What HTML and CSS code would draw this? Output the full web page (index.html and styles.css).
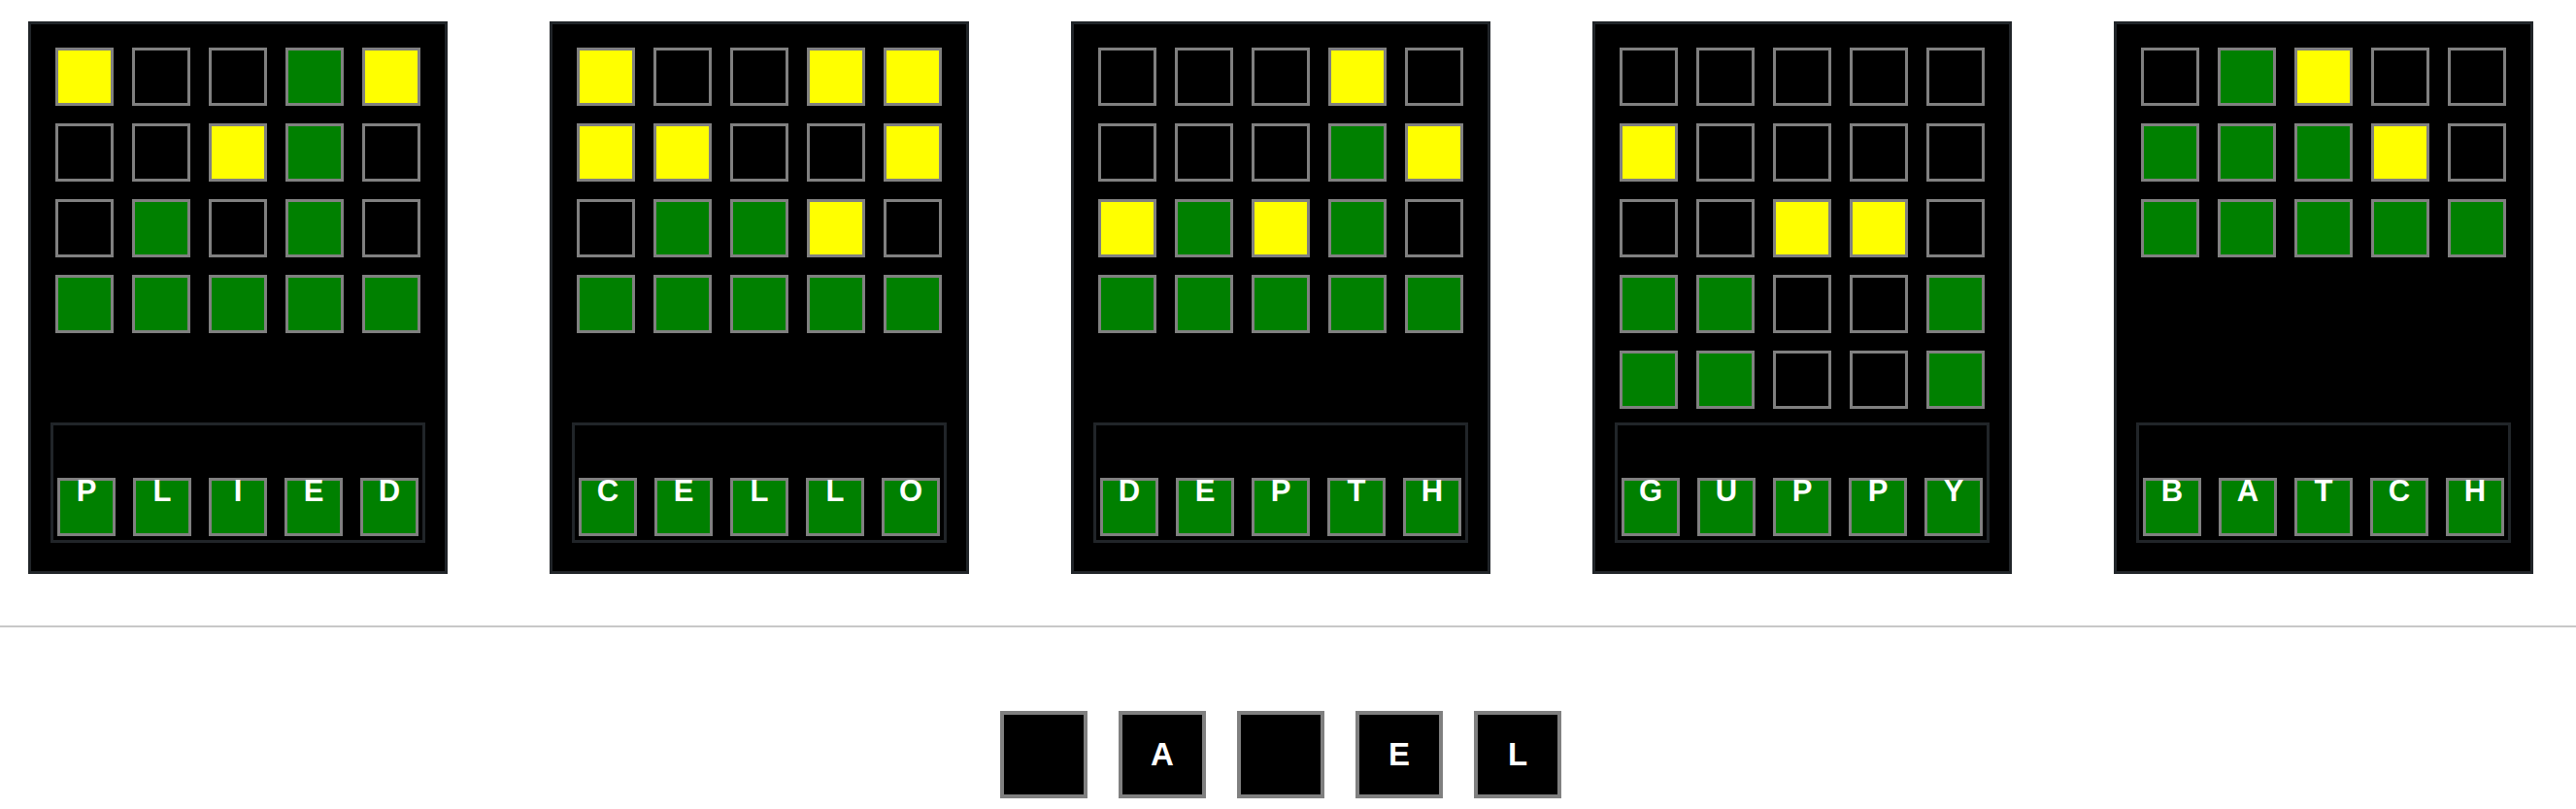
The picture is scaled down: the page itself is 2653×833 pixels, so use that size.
FILE: index.html
```html
<!DOCTYPE html>
<html>
<head>
<meta charset="utf-8">
<title>Boards</title>
<link rel="stylesheet" href="styles.css">
</head>
<body>
<div class="boards">
  <div class="board">
    <div class="guesses">
      <div class="tile y"></div><div class="tile"></div><div class="tile"></div><div class="tile g"></div><div class="tile y"></div>
      <div class="tile"></div><div class="tile"></div><div class="tile y"></div><div class="tile g"></div><div class="tile"></div>
      <div class="tile"></div><div class="tile g"></div><div class="tile"></div><div class="tile g"></div><div class="tile"></div>
      <div class="tile g"></div><div class="tile g"></div><div class="tile g"></div><div class="tile g"></div><div class="tile g"></div>
    </div>
    <div class="answer">
      <div class="tile g"><span class="letter">P</span></div>
      <div class="tile g"><span class="letter">L</span></div>
      <div class="tile g"><span class="letter">I</span></div>
      <div class="tile g"><span class="letter">E</span></div>
      <div class="tile g"><span class="letter">D</span></div>
    </div>
  </div>

  <div class="board">
    <div class="guesses">
      <div class="tile y"></div><div class="tile"></div><div class="tile"></div><div class="tile y"></div><div class="tile y"></div>
      <div class="tile y"></div><div class="tile y"></div><div class="tile"></div><div class="tile"></div><div class="tile y"></div>
      <div class="tile"></div><div class="tile g"></div><div class="tile g"></div><div class="tile y"></div><div class="tile"></div>
      <div class="tile g"></div><div class="tile g"></div><div class="tile g"></div><div class="tile g"></div><div class="tile g"></div>
    </div>
    <div class="answer">
      <div class="tile g"><span class="letter">C</span></div>
      <div class="tile g"><span class="letter">E</span></div>
      <div class="tile g"><span class="letter">L</span></div>
      <div class="tile g"><span class="letter">L</span></div>
      <div class="tile g"><span class="letter">O</span></div>
    </div>
  </div>

  <div class="board">
    <div class="guesses">
      <div class="tile"></div><div class="tile"></div><div class="tile"></div><div class="tile y"></div><div class="tile"></div>
      <div class="tile"></div><div class="tile"></div><div class="tile"></div><div class="tile g"></div><div class="tile y"></div>
      <div class="tile y"></div><div class="tile g"></div><div class="tile y"></div><div class="tile g"></div><div class="tile"></div>
      <div class="tile g"></div><div class="tile g"></div><div class="tile g"></div><div class="tile g"></div><div class="tile g"></div>
    </div>
    <div class="answer">
      <div class="tile g"><span class="letter">D</span></div>
      <div class="tile g"><span class="letter">E</span></div>
      <div class="tile g"><span class="letter">P</span></div>
      <div class="tile g"><span class="letter">T</span></div>
      <div class="tile g"><span class="letter">H</span></div>
    </div>
  </div>

  <div class="board">
    <div class="guesses">
      <div class="tile"></div><div class="tile"></div><div class="tile"></div><div class="tile"></div><div class="tile"></div>
      <div class="tile y"></div><div class="tile"></div><div class="tile"></div><div class="tile"></div><div class="tile"></div>
      <div class="tile"></div><div class="tile"></div><div class="tile y"></div><div class="tile y"></div><div class="tile"></div>
      <div class="tile g"></div><div class="tile g"></div><div class="tile"></div><div class="tile"></div><div class="tile g"></div>
      <div class="tile g"></div><div class="tile g"></div><div class="tile"></div><div class="tile"></div><div class="tile g"></div>
    </div>
    <div class="answer">
      <div class="tile g"><span class="letter">G</span></div>
      <div class="tile g"><span class="letter">U</span></div>
      <div class="tile g"><span class="letter">P</span></div>
      <div class="tile g"><span class="letter">P</span></div>
      <div class="tile g"><span class="letter">Y</span></div>
    </div>
  </div>

  <div class="board">
    <div class="guesses">
      <div class="tile"></div><div class="tile g"></div><div class="tile y"></div><div class="tile"></div><div class="tile"></div>
      <div class="tile g"></div><div class="tile g"></div><div class="tile g"></div><div class="tile y"></div><div class="tile"></div>
      <div class="tile g"></div><div class="tile g"></div><div class="tile g"></div><div class="tile g"></div><div class="tile g"></div>
    </div>
    <div class="answer">
      <div class="tile g"><span class="letter">B</span></div>
      <div class="tile g"><span class="letter">A</span></div>
      <div class="tile g"><span class="letter">T</span></div>
      <div class="tile g"><span class="letter">C</span></div>
      <div class="tile g"><span class="letter">H</span></div>
    </div>
  </div>
</div>

<hr class="divider">

<div class="keys">
  <div class="key"></div>
  <div class="key">A</div>
  <div class="key"></div>
  <div class="key">E</div>
  <div class="key">L</div>
</div>
</body>
</html>
```

FILE: styles.css
```css
html, body {
  margin: 0;
  padding: 0;
  background: #ffffff;
  font-family: "Liberation Sans", Arial, sans-serif;
}

.boards {
  display: flex;
  justify-content: center;
  gap: 105px;
  padding: 22px 15px 0 0;
}

.board {
  box-sizing: border-box;
  width: 432px;
  background: #000000;
  border: 3px solid #212529;
  padding: 24px 0 29px;
  display: flex;
  flex-direction: column;
  align-items: center;
}

.guesses {
  height: 386px;
  display: grid;
  grid-template-columns: repeat(5, 60px);
  grid-auto-rows: 60px;
  column-gap: 19px;
  row-gap: 18px;
  align-content: start;
}

.tile {
  box-sizing: border-box;
  width: 60px;
  height: 60px;
  border: 3px solid #808080;
  background: #000000;
  text-align: center;
}

.tile.g { background: #008000; }
.tile.y { background: #ffff00; }

.answer {
  box-sizing: border-box;
  width: 386px;
  height: 124px;
  border: 3px solid #212529;
  padding: 4px;
  display: flex;
  align-items: flex-end;
  gap: 18px;
}

.letter {
  display: block;
  color: #ffffff;
  font-weight: bold;
  font-size: 31px;
  line-height: 22px;
}

.divider {
  margin: 53px 0 0;
  border: 0;
  height: 2px;
  background: #c8c8c8;
}

.keys {
  display: flex;
  justify-content: center;
  gap: 32px;
  padding: 86px 15px 11px 0;
}

.key {
  box-sizing: border-box;
  width: 90px;
  height: 90px;
  border: 4px solid #808080;
  background: #000000;
  color: #ffffff;
  font-weight: bold;
  font-size: 33px;
  display: flex;
  align-items: center;
  justify-content: center;
}
```
